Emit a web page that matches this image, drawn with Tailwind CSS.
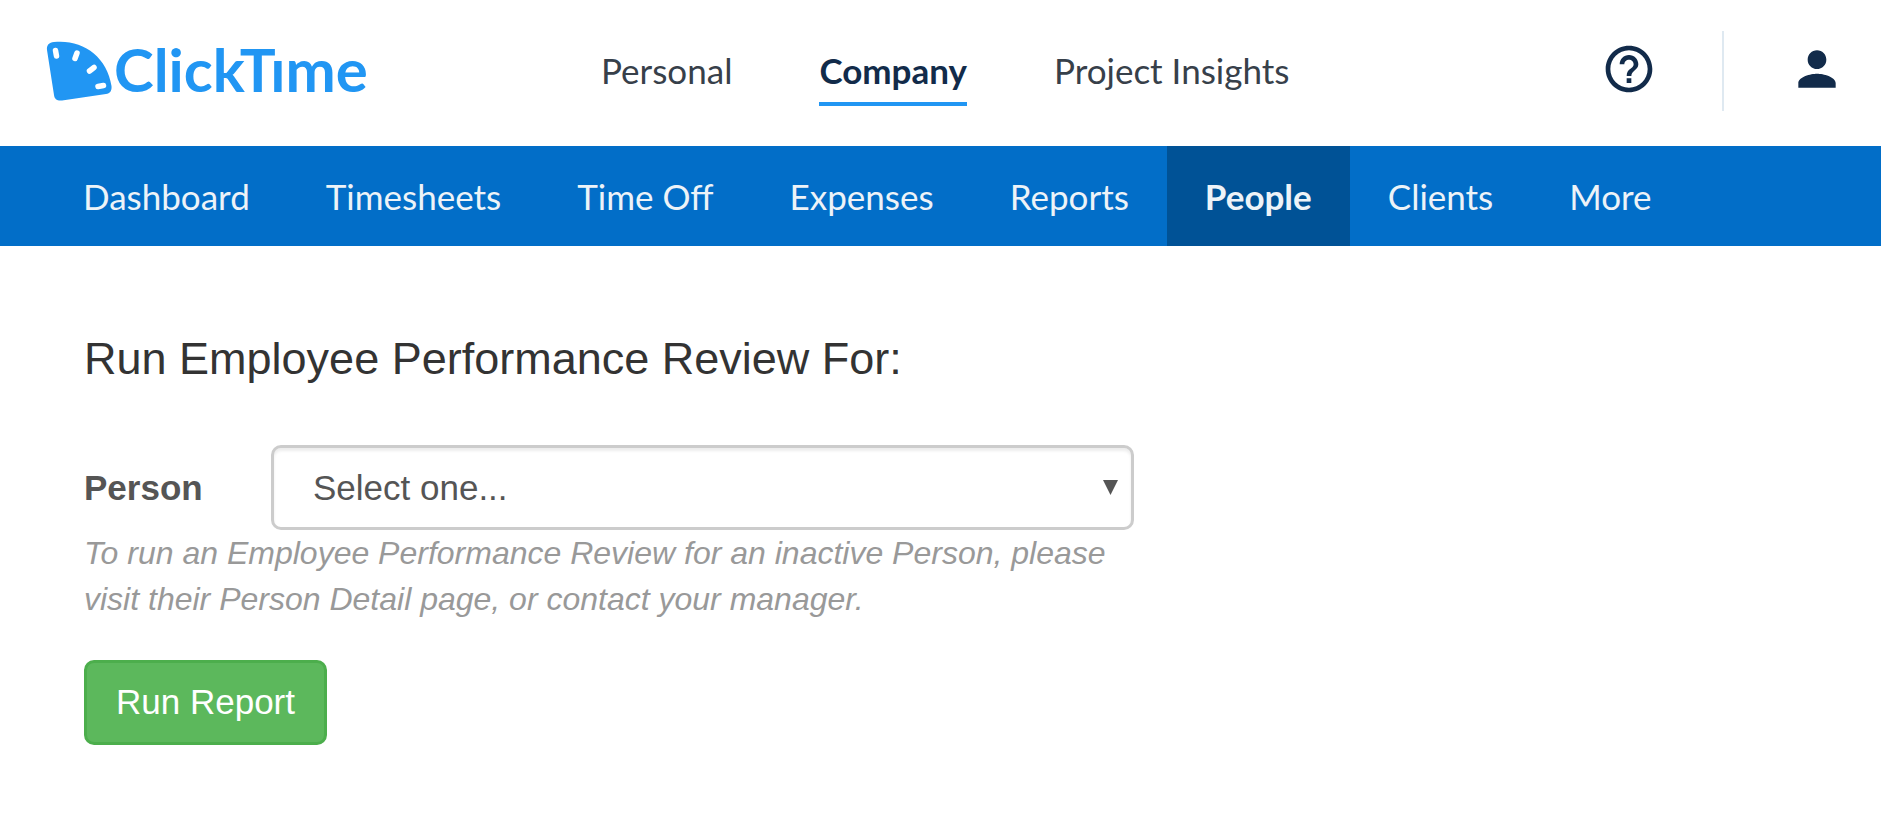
<!DOCTYPE html>
<html lang="en">
<head>
<meta charset="utf-8">
<meta name="viewport" content="width=device-width, initial-scale=1">
<title>Employee Performance Review - ClickTime</title>
<script src="https://cdn.jsdelivr.net/npm/@tailwindcss/browser@4"></script>
</head>
<body class="bg-white font-['Liberation_Sans',Arial,sans-serif] text-[#555555]">
<header class="flex h-[146px] items-center font-[Lato,sans-serif] text-[35px] leading-[42px] text-[#37404a]">
  <a href="#" aria-label="ClickTime" class="ml-[46px] w-[555px] shrink-0 text-[#2196f3]">
    <svg class="block h-[86px] w-[330px]" viewBox="0 -10 330 86" fill="currentColor" aria-hidden="true">
      <path d="M1 10C.5 5 3 2.500 8 2C36-1 61 16 65.500 46C66 51 64 53.500 60 54L16 60.500C11 61 8.500 59 8 55Z"/>
      <g stroke="#fff" stroke-width="5.500" stroke-linecap="round">
        <path d="M9.500 10.500L10.500 16M31 13L29 18.500M48 27.500L43.500 31M57.500 45.500L52 46.500"/>
      </g>
      <text x="68" y="52" font-family="Lato, sans-serif" font-weight="700" font-size="60">ClickTıme</text>
    </svg>
  </a>
  <nav aria-label="Areas" class="flex gap-[87px] pt-2 whitespace-nowrap">
    <a href="#" class="border-b-4 border-transparent pb-[11px]">Personal</a>
    <a href="#" aria-current="page" class="border-b-4 border-[#2196f3] pb-[11px] font-bold text-[#122b4a]">Company</a>
    <a href="#" class="border-b-4 border-transparent pb-[11px]">Project Insights</a>
  </nav>
  <div class="ml-auto flex items-center pr-9 pb-1 text-[#122b4a]">
    <button type="button" aria-label="Help" class="mr-[65px] pb-1">
      <svg class="block size-[56px]" viewBox="0 0 24 24" fill="currentColor"><path d="M11 18h2v-2h-2v2zm1-16C6.480 2 2 6.480 2 12s4.480 10 10 10 10-4.480 10-10S17.520 2 12 2zm0 18c-4.410 0-8-3.590-8-8s3.590-8 8-8 8 3.590 8 8-3.590 8-8 8zm0-14c-2.210 0-4 1.790-4 4h2c0-1.100.9-2 2-2s2 .9 2 2c0 2-3 1.750-3 5h2c0-2.250 3-2.500 3-5 0-2.210-1.790-4-4-4z"/></svg>
    </button>
    <span class="h-20 w-[2px] bg-[#dfe9f1]"></span>
    <button type="button" aria-label="Account" class="ml-[65px] pb-1">
      <svg class="block size-[56px]" viewBox="0 0 24 24" fill="currentColor"><path d="M12 12c2.210 0 4-1.790 4-4s-1.790-4-4-4-4 1.790-4 4 1.790 4 4 4zm0 2c-2.670 0-8 1.340-8 4v2h16v-2c0-2.660-5.330-4-8-4z"/></svg>
    </button>
  </div>
</header>
<nav aria-label="Company" class="flex h-[100px] bg-[#026ec8] pl-[45px] font-[Lato,sans-serif] text-[35px] leading-[100px] whitespace-nowrap text-[#edf3f8]">
  <a href="#" class="px-[38px]">Dashboard</a>
  <a href="#" class="px-[38px]">Timesheets</a>
  <a href="#" class="px-[38px]">Time Off</a>
  <a href="#" class="px-[38px]">Expenses</a>
  <a href="#" class="px-[38px]">Reports</a>
  <a href="#" aria-current="page" class="bg-[#005296] px-[38px] font-bold">People</a>
  <a href="#" class="px-[38px]">Clients</a>
  <a href="#" class="px-[38px]">More</a>
</nav>
<main class="px-[84px] pt-[87px] pb-[86px]">
  <h1 class="text-[45px] leading-[52px] text-[#333333]">Run Employee Performance Review For:</h1>
  <form class="mt-[60px] max-w-[1050px]">
    <div class="flex items-center">
      <label for="person" class="w-[187px] shrink-0 pt-[2px] text-[35px] font-bold">Person</label>
      <div class="relative flex-1">
        <select id="person" class="block h-[85px] w-full appearance-none rounded-[10px] border-3 border-[#cccccc] bg-white px-[39px] pt-[2px] text-[35px] shadow-[inset_0_3px_3px_rgba(0,0,0,0.075)]">
          <option>Select one...</option>
        </select>
        <svg class="pointer-events-none absolute top-[35px] right-4 h-[15px] w-[15px]" viewBox="0 0 15 15" fill="currentColor" aria-hidden="true"><path d="M0 0H15L7.500 15Z"/></svg>
      </div>
    </div>
    <p class="text-[32px] leading-[46px] text-[#999999] italic">To run an Employee Performance Review for an inactive Person, please visit their Person Detail page, or contact your manager.</p>
    <button type="submit" class="mt-[38px] h-[85px] rounded-[10px] border-3 border-[#4cae4c] bg-[#5cb85c] px-[29px] text-[35px] text-white">Run Report</button>
  </form>
</main>
</body>
</html>
